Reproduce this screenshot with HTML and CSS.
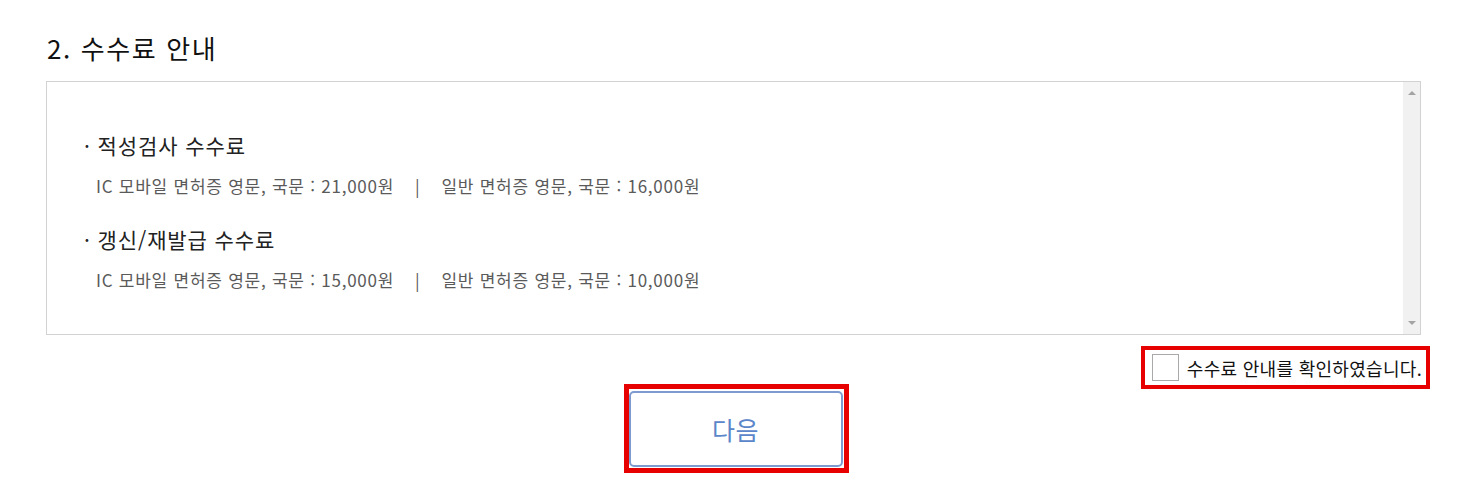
FILE: index.html
```html
<!DOCTYPE html>
<html lang="ko">
<head>
    <meta charset="utf-8">
    <title>수수료 안내</title>
    <link rel="stylesheet" href="styles.css">
</head>
<body>
    <div class="section">
        <h2 class="section-title">2. 수수료 안내</h2>

        <div class="fee-box">
            <div class="fee-content">
                <div class="fee-item">
                    <p class="fee-name">· 적성검사 수수료</p>
                    <p class="fee-detail">IC 모바일 면허증 영문, 국문 : 21,000원<span class="bar">|</span>일반 면허증 영문, 국문 : 16,000원</p>
                </div>
                <div class="fee-item">
                    <p class="fee-name">· 갱신/재발급 수수료</p>
                    <p class="fee-detail">IC 모바일 면허증 영문, 국문 : 15,000원<span class="bar">|</span>일반 면허증 영문, 국문 : 10,000원</p>
                </div>
            </div>
            <div class="scrollbar">
                <span class="arrow arrow-up"></span>
                <span class="arrow arrow-down"></span>
            </div>
        </div>

        <div class="agree-row">
            <label class="agree mark">
                <input type="checkbox" class="agree-check">
                <span>수수료 안내를 확인하였습니다.</span>
            </label>
        </div>

        <div class="btn-row">
            <div class="mark btn-mark">
                <button type="button" class="btn-next">다음</button>
            </div>
        </div>
    </div>
</body>
</html>
```

FILE: styles.css
```css
body {
    margin: 0;
    background-color: #fff;
    font-family: "Noto Sans CJK KR", "Noto Sans", sans-serif;
    color: #111;
}
.section {
    width: 1375px;
    margin-left: 46px;
    padding-top: 33px;
}
.section-title {
    margin: 0 0 18px 1px;
    font-size: 26px;
    line-height: 30px;
    font-weight: 400;
    letter-spacing: 1.6px;
    color: #111;
}
.fee-box {
    display: flex;
    height: 254px;
    box-sizing: border-box;
    border: 1px solid #d2d2d2;
}
.fee-content {
    flex: 1;
    padding: 49px 0 0 37px;
}
.fee-item + .fee-item {
    margin-top: 27px;
}
.fee-name {
    margin: 0;
    font-size: 21px;
    line-height: 28px;
    letter-spacing: 0.9px;
    color: #222;
}
.fee-detail {
    margin: 15px 0 0 12px;
    font-size: 17px;
    line-height: 24px;
    letter-spacing: 0.75px;
    color: #5a5a5a;
}
.bar {
    margin: 0 21px;
}
.scrollbar {
    width: 17px;
    background-color: #f1f1f1;
    display: flex;
    flex-direction: column;
    justify-content: space-between;
    align-items: center;
    padding: 9px 0 9px;
}
.arrow {
    width: 0;
    height: 0;
    border-left: 4px solid transparent;
    border-right: 4px solid transparent;
}
.arrow-up {
    border-bottom: 4px solid #a3a3a3;
}
.arrow-down {
    border-top: 4px solid #a3a3a3;
}
.mark {
    border: 4px solid #e60000;
}
.agree-row {
    display: flex;
    justify-content: flex-end;
    margin-top: 11px;
    margin-right: -9px;
}
.agree {
    display: inline-flex;
    align-items: center;
    gap: 8px;
    height: 35px;
    padding: 0 4px 0 7px;
    font-size: 18px;
    letter-spacing: 0.3px;
    color: #111;
    cursor: pointer;
}
.agree-check {
    appearance: none;
    margin: 0;
    width: 27px;
    height: 27px;
    box-sizing: border-box;
    border: 1px solid #a9a9a9;
    background-color: #fff;
}
.btn-row {
    display: flex;
    justify-content: center;
    margin-top: -5px;
    padding-left: 5px;
}
.btn-mark {
    border-width: 5px;
    padding: 2px 1px 1px 0;
}
.btn-next {
    display: block;
    width: 214px;
    height: 76px;
    background-color: #fff;
    border: 2px solid #7d9bd0;
    border-radius: 5px;
    font-family: inherit;
    font-size: 25px;
    letter-spacing: 0.5px;
    color: #5b86c9;
    cursor: pointer;
}
```
